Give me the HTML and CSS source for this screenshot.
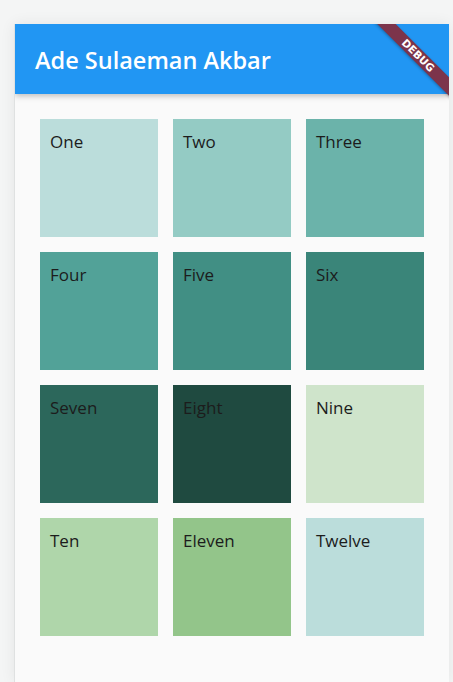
FILE: index.html
```html
<!DOCTYPE html>
<html lang="en">
<head>
  <meta charset="UTF-8">
  <meta name="viewport" content="width=device-width, initial-scale=1.0">
  <title>Ade Sulaeman Akbar</title>
  <link rel="stylesheet" href="styles.css">
</head>
<body>
  <div class="device">
    <header class="app-bar">
      <h1>Ade Sulaeman Akbar</h1>
    </header>
    <div class="debug-banner">DEBUG</div>

    <main class="content">
      <div class="grid">
        <div class="tile c1">One</div>
        <div class="tile c2">Two</div>
        <div class="tile c3">Three</div>
        <div class="tile c4">Four</div>
        <div class="tile c5">Five</div>
        <div class="tile c6">Six</div>
        <div class="tile c7">Seven</div>
        <div class="tile c8">Eight</div>
        <div class="tile c9">Nine</div>
        <div class="tile c10">Ten</div>
        <div class="tile c11">Eleven</div>
        <div class="tile c12">Twelve</div>
      </div>
    </main>
  </div>
</body>
</html>
```

FILE: styles.css
```css
body {
  margin: 0;
  padding: 0;
  background: #f4f5f5;
  font-family: "Open Sans", "Noto Sans", sans-serif;
  overflow: hidden;
}

.device {
  position: relative;
  margin: 24px 0 0 14px;
  width: 434px;
  height: 658px;
  background: #fafafa;
  border-left: 1px solid #dfe1e1;
  box-shadow: 0 0 14px rgba(0, 0, 0, 0.07);
  overflow: hidden;
}

.app-bar {
  height: 70px;
  background: #2196f3;
  display: flex;
  align-items: center;
  padding: 0 20px;
  box-shadow: 0 2px 6px rgba(0, 0, 0, 0.25);
}
.app-bar h1 {
  margin: 2px 0 0 0;
  color: white;
  font-size: 23.5px;
  font-weight: 600;
}

.debug-banner {
  position: absolute;
  top: 25px;
  left: 343px;
  width: 120px;
  height: 13px;
  line-height: 13px;
  background: #7c344b;
  color: white;
  font-family: "DejaVu Sans", sans-serif;
  font-size: 10.5px;
  font-weight: bold;
  text-align: center;
  transform: rotate(45deg);
  box-shadow: 0 1px 3px rgba(0, 0, 0, 0.3);
}

.content {
  padding: 25px;
}

.grid {
  display: grid;
  grid-template-columns: repeat(3, 118px);
  grid-auto-rows: 118px;
  gap: 15px;
}

.tile {
  padding: 10px;
  font-size: 17px;
  line-height: 26px;
  color: #1c1c1c;
}

.c1 { background: #bbdddb; }
.c2 { background: #94cbc4; }
.c3 { background: #6bb3aa; }
.c4 { background: #52a298; }
.c5 { background: #418f84; }
.c6 { background: #3a8579; }
.c7 { background: #2c675b; }
.c8 { background: #1f4a40; }
.c9 { background: #cfe4cb; }
.c10 { background: #afd6aa; }
.c11 { background: #93c58a; }
.c12 { background: #bbdddb; }
```
